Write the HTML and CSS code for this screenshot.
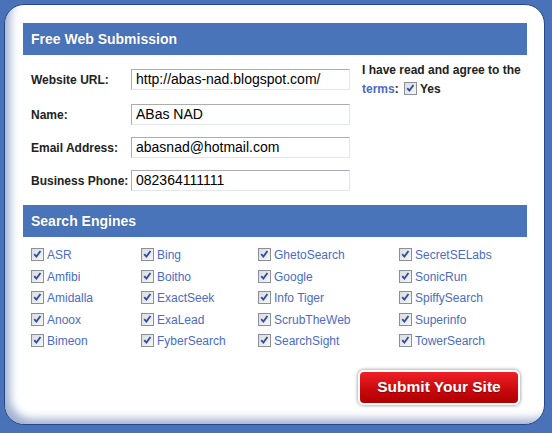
FILE: index.html
```html
<!DOCTYPE html>
<html lang="en">
<head>
    <meta charset="UTF-8">
    <title>Free Web Submission</title>
    <link rel="stylesheet" href="styles.css">
</head>
<body>

<div class="panel">
    <h2 class="bar">Free Web Submission</h2>

    <div class="details">
        <div class="fields">
            <div class="row">
                <label>Website URL:</label>
                <div class="field">http://abas-nad.blogspot.com/</div>
            </div>
            <div class="row first-gap">
                <label>Name:</label>
                <div class="field">ABas NAD</div>
            </div>
            <div class="row">
                <label>Email Address:</label>
                <div class="field">abasnad@hotmail.com</div>
            </div>
            <div class="row">
                <label>Business Phone:</label>
                <div class="field">082364111111</div>
            </div>
        </div>
        <div class="terms">
            I have read and agree to the<br>
            <a href="#">terms</a>:
            <span class="check"><svg viewBox="0 0 13 13"><path d="M2.6 6 L5.2 9 L10 2.4" /></svg></span>Yes
        </div>
    </div>

    <h2 class="bar">Search Engines</h2>

    <ul class="engines">
        <li><span class="check"><svg viewBox="0 0 13 13"><path d="M2.6 6 L5.2 9 L10 2.4" /></svg></span>ASR</li>
        <li><span class="check"><svg viewBox="0 0 13 13"><path d="M2.6 6 L5.2 9 L10 2.4" /></svg></span>Amfibi</li>
        <li><span class="check"><svg viewBox="0 0 13 13"><path d="M2.6 6 L5.2 9 L10 2.4" /></svg></span>Amidalla</li>
        <li><span class="check"><svg viewBox="0 0 13 13"><path d="M2.6 6 L5.2 9 L10 2.4" /></svg></span>Anoox</li>
        <li><span class="check"><svg viewBox="0 0 13 13"><path d="M2.6 6 L5.2 9 L10 2.4" /></svg></span>Bimeon</li>
        <li><span class="check"><svg viewBox="0 0 13 13"><path d="M2.6 6 L5.2 9 L10 2.4" /></svg></span>Bing</li>
        <li><span class="check"><svg viewBox="0 0 13 13"><path d="M2.6 6 L5.2 9 L10 2.4" /></svg></span>Boitho</li>
        <li><span class="check"><svg viewBox="0 0 13 13"><path d="M2.6 6 L5.2 9 L10 2.4" /></svg></span>ExactSeek</li>
        <li><span class="check"><svg viewBox="0 0 13 13"><path d="M2.6 6 L5.2 9 L10 2.4" /></svg></span>ExaLead</li>
        <li><span class="check"><svg viewBox="0 0 13 13"><path d="M2.6 6 L5.2 9 L10 2.4" /></svg></span>FyberSearch</li>
        <li><span class="check"><svg viewBox="0 0 13 13"><path d="M2.6 6 L5.2 9 L10 2.4" /></svg></span>GhetoSearch</li>
        <li><span class="check"><svg viewBox="0 0 13 13"><path d="M2.6 6 L5.2 9 L10 2.4" /></svg></span>Google</li>
        <li><span class="check"><svg viewBox="0 0 13 13"><path d="M2.6 6 L5.2 9 L10 2.4" /></svg></span>Info Tiger</li>
        <li><span class="check"><svg viewBox="0 0 13 13"><path d="M2.6 6 L5.2 9 L10 2.4" /></svg></span>ScrubTheWeb</li>
        <li><span class="check"><svg viewBox="0 0 13 13"><path d="M2.6 6 L5.2 9 L10 2.4" /></svg></span>SearchSight</li>
        <li><span class="check"><svg viewBox="0 0 13 13"><path d="M2.6 6 L5.2 9 L10 2.4" /></svg></span>SecretSELabs</li>
        <li><span class="check"><svg viewBox="0 0 13 13"><path d="M2.6 6 L5.2 9 L10 2.4" /></svg></span>SonicRun</li>
        <li><span class="check"><svg viewBox="0 0 13 13"><path d="M2.6 6 L5.2 9 L10 2.4" /></svg></span>SpiffySearch</li>
        <li><span class="check"><svg viewBox="0 0 13 13"><path d="M2.6 6 L5.2 9 L10 2.4" /></svg></span>Superinfo</li>
        <li><span class="check"><svg viewBox="0 0 13 13"><path d="M2.6 6 L5.2 9 L10 2.4" /></svg></span>TowerSearch</li>
    </ul>

    <div class="actions">
        <button class="submit">Submit Your Site</button>
    </div>
</div>

</body>
</html>
```

FILE: styles.css
```css
body {
    margin: 0;
    font-family: 'Liberation Sans', Arial, sans-serif;
    background-color: #4a72b8;
}
.panel {
    box-sizing: border-box;
    width: 541px;
    height: 421px;
    margin: 4px 0 0 4px;
    padding: 18px 17px 0 18px;
    background-color: #fff;
    border: 1px solid #24478a;
    border-radius: 20px;
    box-shadow: inset 8px -8px 9px -3px rgba(70, 100, 160, 0.5);
}
.bar {
    margin: 0;
    height: 32px;
    line-height: 32px;
    padding-left: 8px;
    background-color: #4a74b9;
    color: #fff;
    font-size: 14px;
    font-weight: bold;
    text-shadow: 0 0 1px rgba(0, 0, 0, 0.25);
}
.details {
    display: flex;
    align-items: flex-start;
    gap: 12px;
    padding: 14px 0 14px 8px;
}
.fields {
    display: flex;
    flex-direction: column;
    gap: 12px;
}
.row {
    display: flex;
    align-items: center;
}
.first-gap {
    margin-top: 2px;
}
.row label {
    width: 100px;
    font-size: 12px;
    font-weight: bold;
    color: #222;
}
.field {
    box-sizing: border-box;
    width: 219px;
    height: 21px;
    line-height: 19px;
    padding-left: 4px;
    font-size: 14px;
    color: #000;
    border: 1px solid #abadb3;
    border-right-color: #e3e6ec;
    border-bottom-color: #e3e6ec;
}
.terms {
    margin-top: -8px;
    font-size: 12px;
    font-weight: bold;
    line-height: 19px;
    color: #222;
}
.terms a {
    color: #4a6cc6;
    text-decoration: none;
}
.terms .check {
    margin-left: 2px;
}
.check {
    display: inline-block;
    box-sizing: border-box;
    width: 13px;
    height: 13px;
    margin-right: 3px;
    vertical-align: -2px;
    border: 1px solid #8a8f99;
    background: linear-gradient(135deg, #dcdcdc, #f6f6f6);
}
.check svg {
    display: block;
    width: 11px;
    height: 11px;
}
.check path {
    fill: none;
    stroke: #2d4fa8;
    stroke-width: 2.2;
}
.engines {
    list-style: none;
    margin: 0;
    padding: 11px 0 0 8px;
    display: grid;
    grid-template-columns: 110px 117px 141px 1fr;
    grid-template-rows: repeat(5, 21.5px);
    grid-auto-flow: column;
}
.engines li {
    font-size: 12px;
    color: #4a6cc6;
    line-height: 14px;
}
.actions {
    display: flex;
    justify-content: flex-end;
    padding: 14px 7px 0 0;
}
.submit {
    width: 162px;
    height: 35px;
    font-family: 'Liberation Sans', Arial, sans-serif;
    font-size: 15.5px;
    font-weight: bold;
    color: #fff;
    text-shadow: 0 1px 1px rgba(80, 0, 0, 0.5);
    background: linear-gradient(#ee2127, #c8080c 60%, #ae0000);
    border: 2px solid #fff;
    border-radius: 6px;
    box-shadow: 0 0 3px 1px rgba(0, 0, 0, 0.3);
    cursor: pointer;
}
```
